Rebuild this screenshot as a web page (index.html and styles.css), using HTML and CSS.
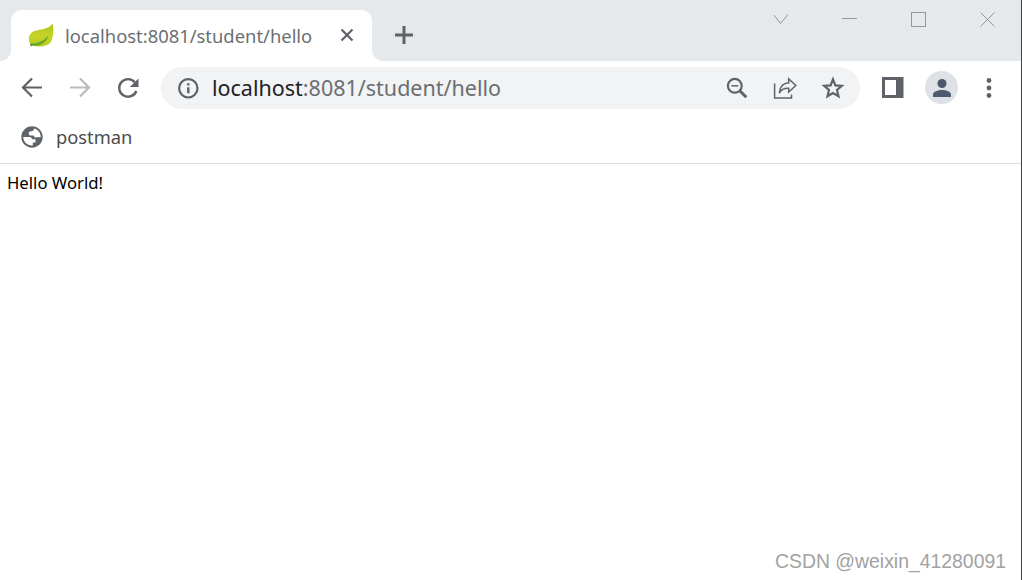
FILE: index.html
```
<!DOCTYPE html>
<html lang="en">
<head>
    <meta charset="UTF-8">
    <meta name="viewport" content="width=device-width, initial-scale=1.0">
    <title>localhost:8081/student/hello</title>
    <link rel="stylesheet" href="styles.css">
</head>
<body>
    <header class="browser">
        <div class="tabs">
            <div class="tabs__edge"></div>
            <div class="tab">
                <svg class="tab__icon" viewBox="0 0 26 26">
                    <defs>
                        <linearGradient id="leaf" x1="0" y1="0" x2="0" y2="1">
                            <stop offset="0" stop-color="#a9c41c" />
                            <stop offset="0.5" stop-color="#c6d42a" />
                            <stop offset="1" stop-color="#b9cc1c" />
                        </linearGradient>
                    </defs>
                    <path fill="url(#leaf)" d="M24.500 0.500C26 7 25.500 15 22.500 19.500C19.500 23 13 24.500 3.500 22.500C0 19 0 13 3.500 9.800C9 5 20 8 24.500 0.500Z" />
                    <path fill="#62a52b" d="M2.500 20.500C10 20.500 17 18 20.500 12C18.500 20 12 23.500 3.500 22.500Z" />
                    <circle cx="3.300" cy="22" r="1.200" fill="#5c9e2c" />
                </svg>
                <span class="tab__title">localhost:8081/student/hello</span>
                <svg class="tab__close" viewBox="0 0 14 14">
                    <path d="M1.500 1.500L12.500 12.500M12.500 1.500L1.500 12.500" />
                </svg>
            </div>
            <div class="tabs__rest">
                <svg class="tabs__new" viewBox="0 0 18 18">
                    <path d="M9 0V18M0 9H18" />
                </svg>
                <svg class="window-btn" viewBox="0 0 15 15">
                    <path d="M1 3L7.500 11.500L15 2.500" />
                </svg>
                <svg class="window-btn window-btn--sharp" viewBox="0 0 15 15">
                    <path d="M0 6.500H15" />
                </svg>
                <svg class="window-btn window-btn--sharp" viewBox="0 0 15 15">
                    <path d="M0.500 0.500H14.500V14.500H0.500Z" />
                </svg>
                <svg class="window-btn" viewBox="0 0 15 15">
                    <path d="M0.500 0.500L14.500 14.500M14.500 0.500L0.500 14.500" />
                </svg>
            </div>
        </div>

        <div class="toolbar">
            <svg class="icon" viewBox="0 0 24 24">
                <path d="M22 11.500H3.500M12 2.500L3 11.500L12 20.500" />
            </svg>
            <svg class="icon icon--disabled" viewBox="0 0 24 24">
                <path d="M2 11.500H20.500M12 2.500L21 11.500L12 20.500" />
            </svg>
            <svg class="icon icon--reload" viewBox="0 0 24 24">
                <path d="M18.800 6.300A8.800 8.800 0 1 0 20.300 15" />
                <path class="icon__fill" d="M22.500 2.500V11H13.800Z" />
            </svg>
            <div class="address">
                <svg class="icon" viewBox="0 0 24 24">
                    <circle cx="12.300" cy="12.300" r="9.200" />
                    <path class="icon__fill" d="M11.100 11.300H13.500V17.300H11.100ZM11.100 7.200H13.500V9.500H11.100Z" />
                </svg>
                <div class="address__url"><span class="address__host">localhost</span>:8081/student/hello</div>
                <svg class="icon" viewBox="0 0 24 24">
                    <circle cx="9.800" cy="9.800" r="6.900" />
                    <path class="icon__thin" d="M6.300 9.800H13.300" />
                    <path class="icon__bold" d="M15 15L21.300 21.300" />
                </svg>
                <svg class="icon" viewBox="0 0 24 24">
                    <path class="icon__thin" d="M1.600 7.500V22H18.500V18.500" />
                    <path class="icon__thin" d="M15.700 2.800L22.800 9.500L15.700 16V12.300C11.500 12 8.500 13.200 6.300 17C6.800 11 10.300 7.200 15.700 6.800Z" />
                </svg>
                <svg class="icon" viewBox="0 0 24 24">
                    <path d="M12 3.300L14.400 9.400L20.800 9.900L16 14L17.500 20.300L12 17L6.500 20.300L8 14L3.200 9.900L9.600 9.400Z" />
                </svg>
            </div>
            <svg class="icon icon--panel" viewBox="0 0 24 24">
                <path class="icon__fill" fill-rule="evenodd" d="M1 1H22.500V22H1ZM4 4V19H15V4Z" />
            </svg>
            <div class="avatar">
                <svg class="avatar__image" viewBox="0 0 20 20">
                    <circle cx="10" cy="5.500" r="4.500" />
                    <path d="M1 19V16.500C1 13.500 6 12 10 12S19 13.500 19 16.500V19Z" />
                </svg>
            </div>
            <svg class="icon icon--menu" viewBox="0 0 24 24">
                <g class="icon__fill">
                    <circle cx="12" cy="4.500" r="2.400" />
                    <circle cx="12" cy="12" r="2.400" />
                    <circle cx="12" cy="19.500" r="2.400" />
                </g>
            </svg>
        </div>

        <nav class="bookmarks">
            <a class="bookmark">
                <svg class="bookmark__icon" viewBox="0 0 22 22">
                    <circle cx="11" cy="11" r="10.700" fill="#5f6368" />
                    <path fill="#fff" d="M2.300 11H8.500C10.200 11 11 12 11 13.300H14.500V16.500H11.800V19.500C6.500 20 2.300 16 2.300 11ZM13 2.500C12.800 4.600 12 5.200 10.300 5.200C8.600 5.200 7.700 6 7.700 7.500C7.700 9 8.600 9.500 10.300 9.500H12.200C13 9.500 13.300 10 13.300 11.300H19.700C20 7.300 17.500 3.800 13 2.500Z" />
                </svg>
                <span class="bookmark__name">postman</span>
            </a>
        </nav>
    </header>

    <main class="page">
        <div class="page__text">Hello World!</div>
        <div class="page__mark">CSDN @weixin_41280091</div>
    </main>
</body>
</html>
```
FILE: styles.css
```
body {
    margin: 0;
    height: 100vh;
    box-sizing: border-box;
    border-right: 1px solid #3f4043;

    display: flex;
    flex-direction: column;

    font-family: "Noto Sans", "Open Sans", sans-serif;

    background: #FFFFFF;
    overflow: hidden;
}

svg {
    flex: none;
    display: block;
    fill: none;
}

.tabs {
    height: 61px;

    display: flex;

    background: linear-gradient(#e5e9ec 30px, #FFFFFF 30px);
}

.tabs__edge {
    width: 11px;

    background: #e5e9ec;
    border-radius: 0 0 11px 0;
}

.tab {
    width: 361px;
    height: 51px;
    margin-top: 10px;
    padding: 0 17px;
    box-sizing: border-box;

    display: flex;
    align-items: center;

    background: #FFFFFF;
    border-radius: 11px 11px 0 0;
}

.tab__icon {
    width: 26px;
    height: 26px;
}

.tab__title {
    width: 265px;
    margin-left: 11px;

    font-size: 18.4px;
    line-height: 26px;
    white-space: nowrap;

    color: #6b6f73;
}

.tab__close {
    width: 14px;
    height: 14px;
    margin: -1px 0 0 10px;

    stroke: #5f6368;
    stroke-width: 2.2;
}

.tabs__rest {
    flex: 1;
    padding: 12px 26px 0 23px;

    display: flex;
    gap: 54px;

    background: #e5e9ec;
    border-radius: 0 0 0 11px;
}

.tabs__new {
    width: 18px;
    height: 18px;
    margin: 14px auto 0 0;

    stroke: #5f6368;
    stroke-width: 3;
}

.window-btn {
    width: 15px;
    height: 15px;

    stroke: #949699;
    stroke-width: 1;
}

.window-btn--sharp {
    shape-rendering: crispEdges;
}

.toolbar {
    height: 54px;
    padding: 0 20px;

    display: flex;
    align-items: center;
    gap: 24px;
}

.icon {
    width: 24px;
    height: 24px;

    stroke: #5f6368;
    stroke-width: 2.2;
}

.icon--disabled {
    stroke: #b9bbbd;
}

.icon--reload {
    stroke-width: 2.4;
}

.icon--panel {
    margin-left: -3px;
}

.icon--menu {
    margin-left: -5px;
}

.icon__fill {
    fill: #5f6368;
    stroke: none;
}

.icon__thin {
    stroke-width: 1.5;
}

.icon__bold {
    stroke-width: 3;
}

.address {
    width: 699px;
    height: 42px;
    margin-left: -3px;
    padding: 0 15px;
    box-sizing: border-box;
    flex: none;

    display: flex;
    align-items: center;
    gap: 24px;

    background: #f1f3f4;
    border-radius: 21px;
}

.address__url {
    flex: 1;
    margin-left: -12px;

    font-size: 21.5px;
    line-height: 30px;
    white-space: nowrap;

    color: #6b6e72;
}

.address__host {
    color: #202124;
}

.avatar {
    width: 33px;
    height: 33px;
    margin: -1px 0 0 -4px;
    flex: none;

    display: flex;
    align-items: center;
    justify-content: center;

    background: #dee1e6;
    border-radius: 50%;
}

.avatar__image {
    width: 20px;
    height: 20px;

    fill: #4d5a6e;
}

.bookmarks {
    height: 49px;
    padding: 0 0 5px 21px;
    box-sizing: border-box;

    display: flex;
    align-items: center;

    border-bottom: 1px solid #dadce0;
}

.bookmark {
    display: flex;
    align-items: center;
    gap: 13px;
}

.bookmark__icon {
    width: 22px;
    height: 22px;
}

.bookmark__name {
    font-size: 18.3px;
    line-height: 26px;

    color: #4a4d51;
}

.page {
    flex: 1;
    padding: 7px 15px 6px 7px;

    display: flex;
    flex-direction: column;
    justify-content: space-between;
}

.page__text {
    font-size: 16.7px;
    line-height: 24px;

    color: #000000;
}

.page__mark {
    align-self: flex-end;

    font-family: "Liberation Sans", Arial, sans-serif;
    font-size: 19.4px;
    line-height: 26px;

    color: #a2a2a2;
}
```
